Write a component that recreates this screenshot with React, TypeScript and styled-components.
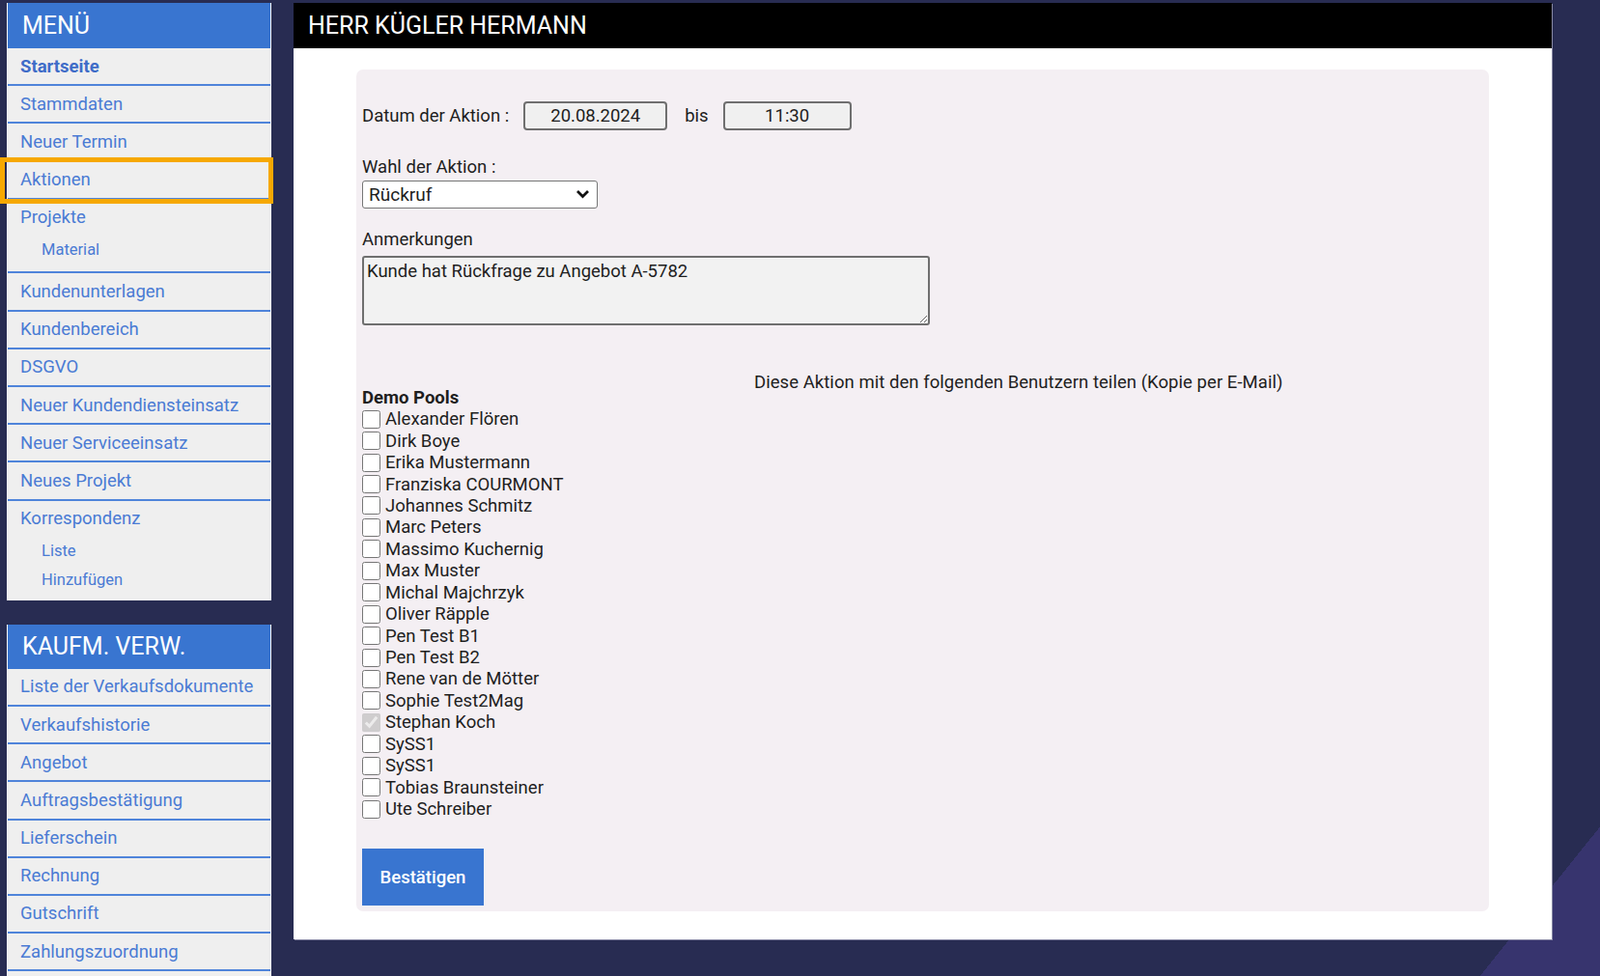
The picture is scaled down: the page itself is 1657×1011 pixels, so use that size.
import React from 'react';
import styled, { createGlobalStyle } from 'styled-components';

const GlobalStyle = createGlobalStyle`
  html, body {
    margin: 0;
    padding: 0;
  }

  body {
    font-family: Roboto, "Liberation Sans", Arial, sans-serif;
  }

  * {
    box-sizing: border-box;
  }
`;

const Page = styled.div`
  height: 100vh;
  overflow: hidden;
  padding: 3px 0 0 7px;
  display: flex;
  align-items: flex-start;
  gap: 23px;
  background: linear-gradient(128.8deg, #282c52 1828px, #37346e 1828px);
`;

const Sidebar = styled.nav`
  width: 274px;
  flex-shrink: 0;
  display: flex;
  flex-direction: column;
  gap: 25px;
`;

const MenuPanel = styled.div<{ $tail?: number }>`
  background: #efefef;
  border-left: 1px solid #f8f8f8;
  border-right: 1px solid #f8f8f8;
  padding-bottom: ${(p) => p.$tail ?? 0}px;
`;

const MenuHeader = styled.div<{ $height: number }>`
  height: ${(p) => p.$height}px;
  background: #3975d0;
  color: #ffffff;
  font-size: 25px;
  display: flex;
  align-items: center;
  padding-left: 15px;
  text-transform: uppercase;
`;

const MenuItem = styled.div<{ $last?: boolean; $highlighted?: boolean }>`
  position: relative;
  border-bottom: ${(p) => (p.$last ? 'none' : '2px solid #4f84da')};
  padding-bottom: ${(p) => (p.$last ? '7px' : '0')};
  &:has(> ul) {
    padding-bottom: ${(p) => (p.$last ? '7px' : '8px')};
  }

  ${(p) =>
    p.$highlighted &&
    `
    &::after {
      content: '';
      position: absolute;
      left: -8px;
      right: -3px;
      top: -5px;
      bottom: -6px;
      border: 5px solid #f6a800;
      pointer-events: none;
    }
  `}
`;

const MenuLink = styled.a<{ $bold?: boolean }>`
  display: flex;
  align-items: center;
  height: 37.2px;
  padding-left: 13px;
  font-size: 18.5px;
  font-weight: ${(p) => (p.$bold ? 700 : 400)};
  color: ${(p) => (p.$bold ? '#3f6cc8' : '#4a7bd4')};
  text-decoration: none;
`;

const SubList = styled.ul`
  list-style: none;
  margin: 0;
  padding: 0;
`;

const SubLink = styled.li`
  height: 29.5px;
  display: flex;
  align-items: center;
  padding-left: 35px;
  font-size: 16.5px;
  color: #4a7bd4;
`;

const Main = styled.main`
  width: 1303px;
  flex-shrink: 0;
  background: #ffffff;
  box-shadow: 1px 1px 0 #8a8aa6;
  padding-bottom: 29px;
`;

const TitleBar = styled.header`
  height: 47px;
  background: #000000;
  color: #ffffff;
  font-size: 25px;
  display: flex;
  align-items: center;
  padding-left: 15px;
`;

const FormPanel = styled.form`
  margin: 22px 65px 0;
  background: #f4eff3;
  border-radius: 7px;
  padding: 33px 6px 6px;
  color: #1e1e1e;
  font-size: 18.5px;
`;

const DateRow = styled.div`
  display: flex;
  align-items: center;
  height: 30px;
`;

const Label = styled.label`
  display: block;
  line-height: 22px;
`;

const DateBox = styled.input<{ $width: number }>`
  width: ${(p) => p.$width}px;
  height: 30px;
  background: #f0f0f0;
  border: 2px solid #6f6f6f;
  border-radius: 4px;
  font-family: inherit;
  font-size: 18.5px;
  color: #1e1e1e;
  text-align: center;
  padding: 0;
`;

const Bis = styled.span`
  margin: 0 15px 0 18px;
`;

const FieldLabel = styled(Label)<{ $top: number }>`
  margin-top: ${(p) => p.$top}px;
`;

const SelectWrap = styled.div`
  position: relative;
  margin-top: 3px;
  width: 244px;
  height: 29px;

  svg {
    position: absolute;
    right: 8px;
    top: 9px;
    pointer-events: none;
  }
`;

const Select = styled.select`
  display: block;
  width: 100%;
  height: 100%;
  appearance: none;
  background: #ffffff;
  border: 1px solid #767676;
  border-radius: 3px;
  font-family: inherit;
  font-size: 19px;
  color: #1e1e1e;
  padding-left: 6px;
`;

const Notes = styled.textarea`
  display: block;
  margin-top: 6px;
  width: 588px;
  height: 72px;
  background: #f2f2f2;
  border: 2px solid #6f6f6f;
  border-radius: 3px;
  font-family: inherit;
  font-size: 18.5px;
  color: #1e1e1e;
  padding: 3px 3px;
  resize: both;
`;

const ShareNote = styled.div`
  margin-top: 53px;
  height: 11px;
  line-height: 12px;
  padding-left: 406px;
  white-space: nowrap;
  letter-spacing: 0.05px;
`;

const GroupTitle = styled.div`
  line-height: 22px;
  font-weight: 700;
`;

const UserRow = styled.label`
  display: flex;
  align-items: center;
  height: 22.45px;
  gap: 5px;
  white-space: nowrap;
`;

const Check = styled.input`
  width: 19px;
  height: 19px;
  margin: 0;
`;

const SubmitButton = styled.button`
  display: block;
  margin-top: 30px;
  width: 126px;
  height: 59px;
  border: none;
  background: #3975d0;
  color: #ffffff;
  font-family: inherit;
  font-size: 18.5px;
  font-weight: 500;
`;

type Entry = { label: string; bold?: boolean; subs?: string[]; highlighted?: boolean };

const mainMenu: Entry[] = [
  { label: 'Startseite', bold: true },
  { label: 'Stammdaten' },
  { label: 'Neuer Termin' },
  { label: 'Aktionen', highlighted: true },
  { label: 'Projekte', subs: ['Material'] },
  { label: 'Kundenunterlagen' },
  { label: 'Kundenbereich' },
  { label: 'DSGVO' },
  { label: 'Neuer Kundendiensteinsatz' },
  { label: 'Neuer Serviceeinsatz' },
  { label: 'Neues Projekt' },
  { label: 'Korrespondenz', subs: ['Liste', 'Hinzufügen'] },
];

const salesMenu: Entry[] = [
  { label: 'Liste der Verkaufsdokumente' },
  { label: 'Verkaufshistorie' },
  { label: 'Angebot' },
  { label: 'Auftragsbestätigung' },
  { label: 'Lieferschein' },
  { label: 'Rechnung' },
  { label: 'Gutschrift' },
  { label: 'Zahlungszuordnung' },
];

const users = [
  'Alexander Flören',
  'Dirk Boye',
  'Erika Mustermann',
  'Franziska COURMONT',
  'Johannes Schmitz',
  'Marc Peters',
  'Massimo Kuchernig',
  'Max Muster',
  'Michal Majchrzyk',
  'Oliver Räpple',
  'Pen Test B1',
  'Pen Test B2',
  'Rene van de Mötter',
  'Sophie Test2Mag',
  'Stephan Koch',
  'SySS1',
  'SySS1',
  'Tobias Braunsteiner',
  'Ute Schreiber',
];

const Menu: React.FC<{
  title: string;
  headerHeight: number;
  items: Entry[];
  closed?: boolean;
  tail?: number;
}> = ({ title, headerHeight, items, closed, tail }) => (
  <MenuPanel $tail={tail}>
    <MenuHeader $height={headerHeight}>{title}</MenuHeader>
    {items.map((item, i) => (
      <MenuItem
        key={item.label}
        $last={closed && i === items.length - 1}
        $highlighted={item.highlighted}
      >
        <MenuLink $bold={item.bold}>{item.label}</MenuLink>
        {item.subs && (
          <SubList>
            {item.subs.map((s) => (
              <SubLink key={s}>{s}</SubLink>
            ))}
          </SubList>
        )}
      </MenuItem>
    ))}
  </MenuPanel>
);

const App: React.FC = () => {
  return (
    <>
      <GlobalStyle />
      <Page>
        <Sidebar>
          <Menu title="Menü" headerHeight={47} items={mainMenu} closed />
          <Menu title="Kaufm. Verw." headerHeight={46} items={salesMenu} tail={60} />
        </Sidebar>

        <Main>
          <TitleBar>HERR KÜGLER HERMANN</TitleBar>
          <FormPanel onSubmit={(e) => e.preventDefault()}>
            <DateRow>
              <span>Datum der Aktion :</span>
              <DateBox $width={149} style={{ marginLeft: 15 }} value="20.08.2024" readOnly />
              <Bis>bis</Bis>
              <DateBox $width={133} value="11:30" readOnly />
            </DateRow>

            <FieldLabel $top={27}>Wahl der Aktion :</FieldLabel>
            <SelectWrap>
              <Select defaultValue="rueckruf">
                <option value="rueckruf">Rückruf</option>
                <option value="besuch">Besuch</option>
                <option value="email">E-Mail</option>
              </Select>
              <svg width="15" height="10" viewBox="0 0 15 10">
                <path d="M2 2 L7.5 7.5 L13 2" fill="none" stroke="#111" strokeWidth="2.8" />
              </svg>
            </SelectWrap>

            <FieldLabel $top={21}>Anmerkungen</FieldLabel>
            <Notes defaultValue="Kunde hat Rückfrage zu Angebot A-5782" />

            <ShareNote>Diese Aktion mit den folgenden Benutzern teilen (Kopie per E-Mail)</ShareNote>

            <GroupTitle>Demo Pools</GroupTitle>
            {users.map((u, i) => (
              <UserRow key={u + i}>
                {u === 'Stephan Koch' ? (
                  <Check type="checkbox" checked disabled readOnly />
                ) : (
                  <Check type="checkbox" />
                )}
                {u}
              </UserRow>
            ))}

            <SubmitButton type="submit">Bestätigen</SubmitButton>
          </FormPanel>
        </Main>
      </Page>
    </>
  );
};

export default App;
